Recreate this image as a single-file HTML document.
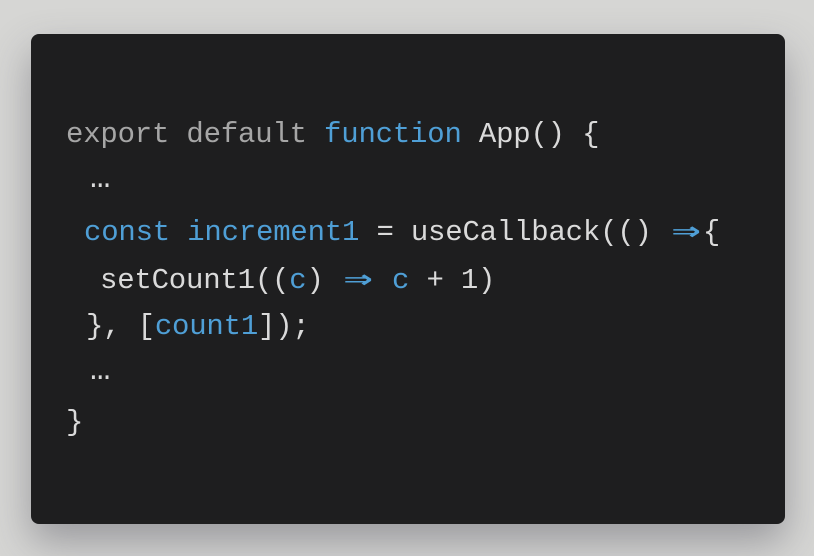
<!DOCTYPE html>
<html><head><meta charset="utf-8"><style>
html,body{margin:0;padding:0;width:814px;height:556px;overflow:hidden;background:#d6d6d4;}
.card{position:absolute;left:31px;top:34px;width:754px;height:490px;background:#1e1e1f;border-radius:8px;box-shadow:0 18px 40px rgba(80,80,90,0.45);}
.l{position:absolute;font-family:"Liberation Mono","DejaVu Sans Mono",monospace;font-size:29px;line-height:34px;color:#dadada;white-space:pre;letter-spacing:-0.2px;}
.g{color:#a6a6a6}.b{color:#4f9fd6}
.a{display:inline-block;width:34px;text-align:center;font-family:"DejaVu Sans Mono",monospace;font-size:30px;font-weight:bold;transform:scaleX(1.6);}
.e{font-size:34px;letter-spacing:0}
</style></head><body>
<div class="card"></div>
<div class="l" style="left:66px;top:118px"><span class="g">export default</span> <span class="b">function</span> App() {</div>
<div class="l e" style="left:90px;top:162px">…</div>
<div class="l" style="left:84px;top:214px"><span class="b">const increment1</span> = useCallback(() <span class="b a">⇒</span>{</div>
<div class="l" style="left:100px;top:262px">setCount1((<span class="b">c</span>) <span class="b a">⇒</span> <span class="b">c</span> + 1)</div>
<div class="l" style="left:86px;top:310px">}, [<span class="b">count1</span>]);</div>
<div class="l e" style="left:90px;top:354px">…</div>
<div class="l" style="left:66px;top:406px">}</div>
</body></html>
